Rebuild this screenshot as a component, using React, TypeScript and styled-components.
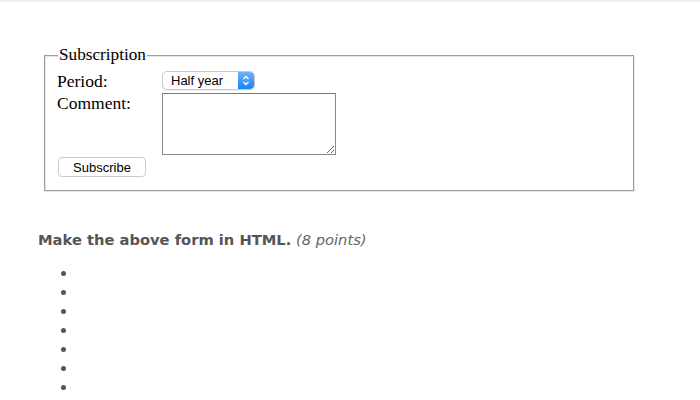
import React from "react";
import styled, { createGlobalStyle } from "styled-components";

const Global = createGlobalStyle`
  html, body { margin: 0; padding: 0; background: #ffffff; }
  body { font-family: "Liberation Serif", "Times New Roman", serif; }
`;

const TopStrip = styled.div`
  height: 2px;
  background: #f2f2f2;
`;

const Page = styled.main`
  padding: 0 0 0 38px;
`;

const Fieldset = styled.fieldset`
  box-sizing: border-box;
  width: 590px;
  margin: 44px 0 0 6px;
  padding: 7px 12px 13px 12px;
  border: 1px solid #9d9d9d;
  box-shadow: inset 1px 1px 0 #e6e6e6, 1px 1px 0 #e6e6e6;
  min-inline-size: 0;
`;

const Legend = styled.legend`
  font-family: "Liberation Serif", "Times New Roman", serif;
  font-size: 17.2px;
  line-height: 18px;
  padding: 0 1px;
  margin-left: 1px;
  color: #000;
`;

const FormGrid = styled.div`
  display: grid;
  grid-template-columns: 105px auto;
  row-gap: 2px;
  justify-content: start;
`;

const Label = styled.label`
  font-family: "Liberation Serif", "Times New Roman", serif;
  font-size: 17.5px;
  line-height: 20px;
  color: #000;
`;

const SelectBox = styled.div`
  box-sizing: border-box;
  display: inline-flex;
  align-items: stretch;
  width: 93px;
  height: 19px;
  border: 1px solid #c9c9c9;
  border-radius: 5px;
  background: #fff;
  overflow: hidden;
  align-self: start;
  box-shadow: 0 1px 0 rgba(0, 0, 0, 0.05);
`;

const SelectText = styled.span`
  flex: 1;
  padding-left: 8px;
  font-family: "Liberation Sans", Arial, sans-serif;
  font-size: 13px;
  line-height: 17px;
  color: #000;
`;

const SelectCap = styled.span`
  width: 16px;
  display: flex;
  align-items: center;
  justify-content: center;
  background: linear-gradient(#6cb3fa, #1a82fb);
  border-radius: 0 4px 4px 0;
`;

const TextArea = styled.textarea`
  box-sizing: border-box;
  width: 174px;
  height: 62px;
  border: 1px solid #8a8a8a;
  border-top-color: #7a7a7a;
  margin: 0;
  padding: 2px;
  resize: both;
  display: block;
`;

const ButtonRow = styled.div`
  grid-column: 1 / span 2;
  padding: 0 0 0 1px;
`;

const Button = styled.button`
  box-sizing: border-box;
  width: 88px;
  height: 20px;
  border: 1px solid #cbcbcb;
  border-radius: 4px;
  background: #fff;
  font-family: "Liberation Sans", Arial, sans-serif;
  font-size: 13px;
  color: #000;
  padding: 0;
  display: block;
`;

const Question = styled.p`
  margin: 39px 0 0 0;
  font-family: "DejaVu Sans", Verdana, sans-serif;
  font-size: 14.7px;
  line-height: 19px;
  color: #555;
`;

const Strong = styled.strong`
  font-weight: bold;
`;

const Points = styled.em`
  font-style: italic;
  color: #666;
`;

const Bullets = styled.ul`
  margin: 14px 0 0 0;
  padding-left: 40px;
  font-family: "DejaVu Sans", Verdana, sans-serif;
  font-size: 17px;
  line-height: 19px;
  color: #555;
  list-style: disc;
`;

const Item = styled.li``;

export default function App() {
  return (
    <>
      <Global />
      <TopStrip />
      <Page>
        <Fieldset>
          <Legend>Subscription</Legend>
          <FormGrid>
            <Label>Period:</Label>
            <SelectBox>
              <SelectText>Half year</SelectText>
              <SelectCap>
                <svg width="8" height="11" viewBox="0 0 8 11" fill="none">
                  <path d="M1.5 4 L4 1.5 L6.5 4" stroke="#fff" strokeWidth="1.3" />
                  <path d="M1.5 7 L4 9.5 L6.5 7" stroke="#fff" strokeWidth="1.3" />
                </svg>
              </SelectCap>
            </SelectBox>
            <Label>Comment:</Label>
            <TextArea />
            <ButtonRow>
              <Button type="button">Subscribe</Button>
            </ButtonRow>
          </FormGrid>
        </Fieldset>
        <Question>
          <Strong>Make the above form in HTML.</Strong> <Points>(8 points)</Points>
        </Question>
        <Bullets>
          {Array.from({ length: 7 }).map((_, i) => (
            <Item key={i}>&nbsp;</Item>
          ))}
        </Bullets>
      </Page>
    </>
  );
}
